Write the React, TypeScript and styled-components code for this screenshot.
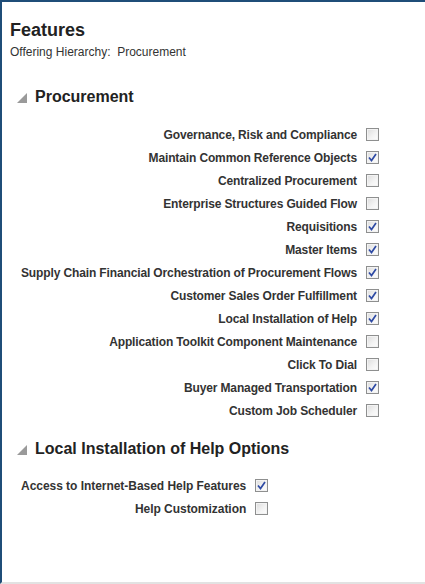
import React from "react";
import styled, { createGlobalStyle } from "styled-components";

const Global = createGlobalStyle`
  html, body { margin: 0; padding: 0; background: #fff; }
  body { font-family: Arial, "Liberation Sans", sans-serif; }
`;

const Frame = styled.div`
  box-sizing: border-box;
  width: 425px;
  height: 584px;
  border-top: 2px solid #1f4d78;
  border-left: 2px solid #1f4d78;
  border-bottom: 2px solid #e2e2e2;
  padding: 17px 0 0 8px;
  color: #333;
`;

const Title = styled.h1`
  margin: 0;
  font-size: 18px;
  line-height: 22px;
  font-weight: bold;
  color: #222;
`;

const Sub = styled.div`
  margin-top: 4px;
  font-size: 12px;
  line-height: 15px;
  color: #333;
  white-space: pre;
`;

const SectionHeader = styled.div<{ $top: number }>`
  display: flex;
  align-items: center;
  margin-top: ${(p) => p.$top}px;
  height: 20px;
  padding-left: 7px;
  gap: 8px;
`;

const Tri = styled.svg`
  width: 10px;
  height: 10px;
  flex: none;
  margin-top: 1px;
`;

const HeaderText = styled.h2`
  margin: 0;
  font-size: 16px;
  line-height: 20px;
  font-weight: bold;
  color: #222;
`;

const Grid = styled.div<{ $top: number; $spacing: number }>`
  display: grid;
  grid-template-columns: max-content 13px;
  column-gap: 9px;
  grid-auto-rows: 23px;
  align-items: center;
  margin-top: ${(p) => p.$top}px;
  padding-left: 11px;
  letter-spacing: ${(p) => p.$spacing}px;
`;

const Label = styled.label`
  justify-self: end;
  font-size: 12px;
  font-weight: bold;
  color: #333;
  white-space: nowrap;
`;

const Box = styled.span`
  box-sizing: border-box;
  width: 13px;
  height: 13px;
  border: 1px solid #8e8f8f;
  background: linear-gradient(135deg, #dcdcdc 0%, #f4f4f4 60%, #fdfdfd 100%);
  display: flex;
  align-items: center;
  justify-content: center;
  box-shadow: inset 0 0 0 1px #f3f3f3;
`;

const Check = ({ on }: { on: boolean }) => (
  <Box>
    {on && (
      <svg width="9" height="9" viewBox="0 0 9 9">
        <path d="M1 4.5 L3.5 7.5 L8 1" fill="none" stroke="#2e4aa4" strokeWidth="1.7" />
      </svg>
    )}
  </Box>
);

const Triangle = () => (
  <Tri viewBox="0 0 10 10">
    <polygon points="10,0 10,10 0,10" fill="#9a9a9a" />
  </Tri>
);

const procurement: [string, boolean][] = [
  ["Governance, Risk and Compliance", false],
  ["Maintain Common Reference Objects", true],
  ["Centralized Procurement", false],
  ["Enterprise Structures Guided Flow", false],
  ["Requisitions", true],
  ["Master Items", true],
  ["Supply Chain Financial Orchestration of Procurement Flows", true],
  ["Customer Sales Order Fulfillment", true],
  ["Local Installation of Help", true],
  ["Application Toolkit Component Maintenance", false],
  ["Click To Dial", false],
  ["Buyer Managed Transportation", true],
  ["Custom Job Scheduler", false],
];

const help: [string, boolean][] = [
  ["Access to Internet-Based Help Features", true],
  ["Help Customization", false],
];

const Rows = ({
  items,
  top,
  spacing,
}: {
  items: [string, boolean][];
  top: number;
  spacing: number;
}) => (
  <Grid $top={top} $spacing={spacing}>
    {items.map(([l, on]) => (
      <React.Fragment key={l}>
        <Label>{l}</Label>
        <Check on={on} />
      </React.Fragment>
    ))}
  </Grid>
);

export default function App() {
  return (
    <>
      <Global />
      <Frame>
        <Title>Features</Title>
        <Sub>{"Offering Hierarchy:  Procurement"}</Sub>
        <SectionHeader $top={27}>
          <Triangle />
          <HeaderText>Procurement</HeaderText>
        </SectionHeader>
        <Rows items={procurement} top={16} spacing={-0.13} />
        <SectionHeader $top={17}>
          <Triangle />
          <HeaderText>Local Installation of Help Options</HeaderText>
        </SectionHeader>
        <Rows items={help} top={15} spacing={-0.04} />
      </Frame>
    </>
  );
}
